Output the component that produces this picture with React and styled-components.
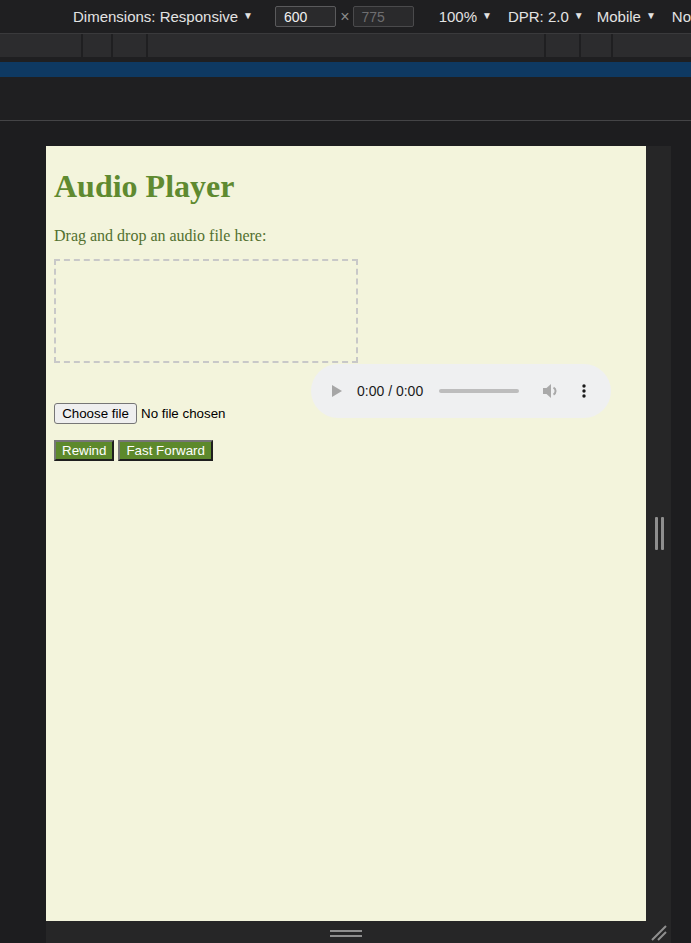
import React from "react";
import styled, { createGlobalStyle } from "styled-components";

const Global = createGlobalStyle`
  html, body { margin: 0; padding: 0; background: #1d1d1f; }
  body { width: 691px; height: 943px; overflow: hidden; }
`;

const Shell = styled.div`
  width: 691px;
  height: 943px;
  display: flex;
  flex-direction: column;
  background: #1d1d1f;
  overflow: hidden;
`;

const Toolbar = styled.div`
  height: 33px;
  flex: none;
  display: flex;
  align-items: center;
  padding-left: 73px;
  background: #1f1f21;
  border-bottom: 1px solid #3a3a3c;
  font-family: "Liberation Sans", Arial, sans-serif;
  font-size: 15px;
  color: #e3e3e3;
  white-space: nowrap;
`;

const Item = styled.span`
  display: inline-flex;
  align-items: center;
  margin-left: ${(p) => p.$ml || 0}px;
  color: ${(p) => p.$dim ? "#8a8a8a" : "#e3e3e3"};
`;

const Caret = styled.span`
  font-size: 10px;
  margin-left: 5px;
  transform: translateY(-1px);
`;

const SizeBox = styled.span`
  box-sizing: border-box;
  display: inline-flex;
  align-items: center;
  width: 62px;
  height: 21px;
  padding-left: 8px;
  border: 1px solid ${(p) => p.$dim ? "#4a4a4c" : "#5a5a5c"};
  border-radius: 2px;
  background: #2a2a2c;
  font-size: 14px;
  color: ${(p) => p.$dim ? "#6e6e70" : "#f0f0f0"};
  margin-left: ${(p) => p.$ml || 0}px;
`;

const Times = styled.span`
  color: #8a8a8a;
  font-size: 16px;
  margin-left: 4px;
  margin-right: 3px;
`;

const Ruler = styled.div`
  height: 23px;
  flex: none;
  display: flex;
  background: #1f1f21;
`;

const Segment = styled.div`
  flex: ${(p) => p.$w ? `0 0 ${p.$w}px` : "1 1 auto"};
  background: #2c2c2e;
  border-right: ${(p) => p.$last ? "none" : "2px solid #1f1f21"};
`;

const Spacer = styled.div`
  height: ${(p) => p.$h}px;
  flex: none;
  background: #1f1f21;
`;

const BlueBar = styled.div`
  height: 15px;
  flex: none;
  background: #0e3962;
`;

const Divider = styled.div`
  height: 1px;
  flex: none;
  background: #444446;
`;

const Stage = styled.div`
  flex: 1;
  padding: 25px 0 0 46px;
  background: #1d1d1f;
`;

const Frame = styled.div`
  display: grid;
  grid-template-columns: 600px 25px;
  grid-template-rows: 775px 22px;
  width: 625px;
`;

const Viewport = styled.div`
  background: #f3f4dc;
  padding: 0 8px;
  overflow: hidden;
  font-family: "Liberation Serif", "Times New Roman", serif;
`;

const SideHandle = styled.div`
  background: #262627;
  display: flex;
  align-items: center;
  justify-content: center;
  gap: 3px;
  padding-left: 2px;
`;

const Grip = styled.span`
  width: 3px;
  height: 33px;
  background: #8e8e8e;
  border-radius: 1px;
`;

const BottomHandle = styled.div`
  background: #262627;
  display: flex;
  flex-direction: column;
  align-items: center;
  justify-content: center;
  gap: 3px;
  padding-top: 3px;
`;

const HGrip = styled.span`
  width: 32px;
  height: 2px;
  background: #8e8e8e;
`;

const Corner = styled.div`
  background: #262627;
  display: flex;
  align-items: flex-end;
  justify-content: flex-start;
  padding: 0 0 2px 5px;
`;

const Title = styled.h1`
  margin: 22px 0 0;
  font-size: 32px;
  line-height: 37px;
  font-weight: bold;
  color: #5f8a30;
`;

const Hint = styled.p`
  margin: 21px 0 14px;
  font-size: 16px;
  line-height: 19px;
  color: #52702f;
`;

const DropZone = styled.div`
  width: 300px;
  height: 100px;
  border: 2px dashed #c8c8c8;
`;

const MediaRow = styled.div`
  display: flex;
  align-items: flex-start;
  margin-top: 1px;
`;

const FilePicker = styled.div`
  display: flex;
  align-items: center;
  width: 257px;
  margin-top: 39px;
  font-family: "Liberation Sans", Arial, sans-serif;
  font-size: 13.33px;
  color: #000;
`;

const PickButton = styled.span`
  box-sizing: border-box;
  height: 21px;
  width: 83px;
  display: inline-flex;
  align-items: center;
  justify-content: center;
  background: #efefef;
  border: 1px solid #767676;
  border-radius: 3px;
  margin-right: 4px;
`;

const Player = styled.div`
  box-sizing: border-box;
  width: 300px;
  height: 54px;
  border-radius: 27px;
  background: #eff0f1;
  display: flex;
  align-items: center;
  padding-left: 21px;
  font-family: "Liberation Sans", Arial, sans-serif;
  font-size: 14px;
  color: #1b1b1b;
`;

const TimeText = styled.span`
  margin-left: 14px;
  white-space: nowrap;
`;

const Track = styled.span`
  width: 80px;
  height: 4px;
  border-radius: 2px;
  background: #bdbdbd;
  margin-left: 16px;
`;

const Controls = styled.div`
  display: flex;
  gap: 4px;
  margin-top: 16px;
`;

const ActionButton = styled.button`
  box-sizing: border-box;
  height: 21px;
  padding: 0 6px;
  background: #5d892c;
  color: #fff;
  font-family: "Liberation Sans", Arial, sans-serif;
  font-size: 13.33px;
  border-style: solid;
  border-width: 2px;
  border-color: #767676 #1e1e1e #1e1e1e #767676;
  cursor: pointer;
`;

export default function App() {
  return (
    <Shell>
      <Global />
      <Toolbar>
        <Item>Dimensions: Responsive<Caret>▼</Caret></Item>
        <SizeBox $ml={22}>600</SizeBox>
        <Times>×</Times>
        <SizeBox $dim>775</SizeBox>
        <Item $ml={25}>100%<Caret>▼</Caret></Item>
        <Item $ml={16}>DPR: 2.0<Caret>▼</Caret></Item>
        <Item $ml={13}>Mobile<Caret>▼</Caret></Item>
        <Item $ml={16}>No</Item>
      </Toolbar>
      <Ruler>
        <Segment $w={81} />
        <Segment $w={28} />
        <Segment $w={33} />
        <Segment $w={396} />
        <Segment $w={33} />
        <Segment $w={30} />
        <Segment $last />
      </Ruler>
      <Spacer $h={5} />
      <BlueBar />
      <Spacer $h={43} />
      <Divider />
      <Stage>
        <Frame>
          <Viewport>
            <Title>Audio Player</Title>
            <Hint>Drag and drop an audio file here:</Hint>
            <DropZone />
            <MediaRow>
              <FilePicker>
                <PickButton>Choose file</PickButton>
                <span>No file chosen</span>
              </FilePicker>
              <Player>
                <svg width="11" height="12" viewBox="0 0 11 12">
                  <path d="M0 0 L10 6 L0 12 Z" fill="#a6a6a6" />
                </svg>
                <TimeText>0:00 / 0:00</TimeText>
                <Track />
                <svg width="17" height="16" viewBox="0 0 17 16" style={{ marginLeft: 24 }}>
                  <path d="M0 5 H3.5 L8 1 V15 L3.5 11 H0 Z" fill="#a9a9a9" />
                  <path d="M10.5 4.5 A4 4 0 0 1 10.5 11.5" stroke="#a9a9a9" strokeWidth="2" fill="none" />
                </svg>
                <svg width="4" height="14" viewBox="0 0 4 14" style={{ marginLeft: 22 }}>
                  <circle cx="2" cy="2" r="1.7" fill="#1b1b1b" />
                  <circle cx="2" cy="7" r="1.7" fill="#1b1b1b" />
                  <circle cx="2" cy="12" r="1.7" fill="#1b1b1b" />
                </svg>
              </Player>
            </MediaRow>
            <Controls>
              <ActionButton>Rewind</ActionButton>
              <ActionButton>Fast Forward</ActionButton>
            </Controls>
          </Viewport>
          <SideHandle>
            <Grip />
            <Grip />
          </SideHandle>
          <BottomHandle>
            <HGrip />
            <HGrip />
          </BottomHandle>
          <Corner>
            <svg width="16" height="16" viewBox="0 0 16 16">
              <path d="M1 15 L15 1 M7 15 L15 7" stroke="#8e8e8e" strokeWidth="2" />
            </svg>
          </Corner>
        </Frame>
      </Stage>
    </Shell>
  );
}
